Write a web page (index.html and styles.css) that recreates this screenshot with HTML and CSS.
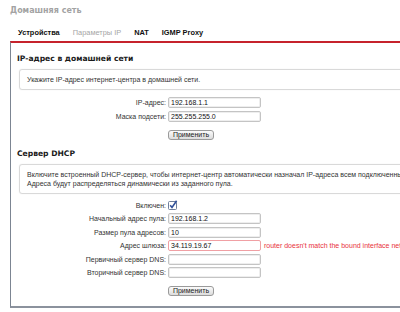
FILE: index.html
```html
<!DOCTYPE html>
<html lang="ru">

<head>
    <meta charset="UTF-8">
    <meta name="viewport" content="width=device-width, initial-scale=1.0">
    <title>Домашняя сеть</title>
    <link rel="stylesheet" href="styles.css">
</head>

<body>
    <div class="page">
        <h1 class="page-title">Домашняя сеть</h1>

        <nav class="tabs">
            <span class="tab">Устройства</span>
            <span class="tab tab-current">Параметры IP</span>
            <span class="tab">NAT</span>
            <span class="tab">IGMP Proxy</span>
        </nav>

        <main class="panel">
            <!-- IP address of the home segment -->
            <section class="section">
                <h2>IP-адрес в домашней сети</h2>
                <div class="info-box">Укажите IP-адрес интернет-центра в домашней сети.</div>

                <div class="form">
                    <div class="form-row">
                        <label>IP-адрес:</label>
                        <input type="text" value="192.168.1.1">
                    </div>
                    <div class="form-row">
                        <label>Маска подсети:</label>
                        <input type="text" value="255.255.255.0">
                    </div>
                </div>
                <div class="actions">
                    <button>Применить</button>
                </div>
            </section>

            <!-- DHCP server -->
            <section class="section">
                <h2>Сервер DHCP</h2>
                <div class="info-box">
                    Включите встроенный DHCP-сервер, чтобы интернет-центр автоматически назначал IP-адреса всем подключенным устройствам.<br>
                    Адреса будут распределяться динамически из заданного пула.
                </div>

                <div class="form form-dhcp">
                    <div class="form-row">
                        <label>Включен:</label>
                        <svg class="checkbox" width="10" height="10" viewBox="0 0 10 10">
                            <rect x="0.5" y="1.5" width="8" height="8" rx="1" fill="#fff" stroke="#6f7f9c"/>
                            <path d="M2.2 5.2 L4 7.4 L8.6 0.8" fill="none" stroke="#2f4f9a" stroke-width="1.6"/>
                        </svg>
                    </div>
                    <div class="form-row">
                        <label>Начальный адрес пула:</label>
                        <input type="text" value="192.168.1.2">
                    </div>
                    <div class="form-row">
                        <label>Размер пула адресов:</label>
                        <input type="text" value="10">
                    </div>
                    <div class="form-row">
                        <label>Адрес шлюза:</label>
                        <input type="text" class="input-error" value="34.119.19.67">
                        <span class="error-text">router doesn't match the bound interface network</span>
                    </div>
                    <div class="form-row">
                        <label>Первичный сервер DNS:</label>
                        <input type="text" value="">
                    </div>
                    <div class="form-row">
                        <label>Вторичный сервер DNS:</label>
                        <input type="text" value="">
                    </div>
                </div>
                <div class="actions">
                    <button>Применить</button>
                </div>
            </section>
        </main>
    </div>
</body>

</html>
```

FILE: styles.css
```css
html,
body {
    margin: 0;
    padding: 0;
    overflow: hidden;
}

body {
    font-family: "Liberation Sans", Arial, sans-serif;
    font-size: 7px;
    color: #333;
    background-color: #fff;
}

.page {
    width: 600px;
    padding-left: 10px;
}

.page-title {
    font-family: "DejaVu Sans", Verdana, sans-serif;
    font-size: 8px;
    line-height: 10px;
    font-weight: bold;
    color: #a3a3a3;
    margin: 6px 0 0 0;
}

.tabs {
    display: flex;
    gap: 13px;
    margin-top: 12px;
    padding-left: 8px;
    font-size: 7.4px;
    line-height: 10px;
}

.tab {
    font-weight: bold;
    color: #111;
}

.tab-current {
    font-weight: normal;
    color: #a5a5a5;
}

.panel {
    margin-top: 3px;
    border-top: 2px solid #c6232c;
    border-left: 1px solid #7c8592;
    border-bottom: 2px solid #8b929d;
    padding: 0 0 10px 8px;
}

.section h2 {
    font-family: "DejaVu Sans", Verdana, sans-serif;
    font-size: 7.6px;
    line-height: 12px;
    font-weight: bold;
    color: #1a1a1a;
    margin: 0 0 4px -2px;
}

.section:first-child h2 {
    margin-top: 10px;
}

.section + .section h2 {
    margin-top: 8px;
}

.info-box {
    border: 1px solid #d9d9d9;
    border-radius: 3px;
    box-shadow: 0 0 1px rgba(0, 0, 0, 0.15);
    padding: 5px 7px;
    line-height: 9px;
    color: #333;
}

.form {
    display: flex;
    flex-direction: column;
    gap: 2.5px;
    margin-top: 7px;
}

.form-dhcp {
    margin-top: 6px;
}

.form-row {
    display: flex;
    align-items: center;
    gap: 2px;
    height: 11px;
}

.form-row label {
    width: 147px;
    text-align: right;
    color: #333;
}

.form-row input {
    box-sizing: border-box;
    width: 93px;
    height: 11px;
    margin: 0;
    padding: 0 2px;
    border: 1px solid #c4c4c4;
    border-radius: 2px;
    box-shadow: inset 0 0 0 1px #eeeeee;
    font-family: "Liberation Sans", Arial, sans-serif;
    font-size: 7px;
    color: #111;
    outline: none;
}

.form-row .input-error {
    border-color: #f0a0a4;
    box-shadow: none;
}

.error-text {
    margin-left: 1px;
    color: #e8313c;
    white-space: nowrap;
}

.checkbox {
    display: block;
}

.actions {
    margin: 8px 0 0 149px;
}

.actions button {
    box-sizing: border-box;
    width: 46px;
    height: 10px;
    padding: 0;
    border: 1px solid #9a9a9a;
    border-radius: 3px;
    background: linear-gradient(#fbfbfb, #dcdcdc);
    font-family: "Liberation Sans", Arial, sans-serif;
    font-size: 7px;
    line-height: 8px;
    color: #222;
}
```
